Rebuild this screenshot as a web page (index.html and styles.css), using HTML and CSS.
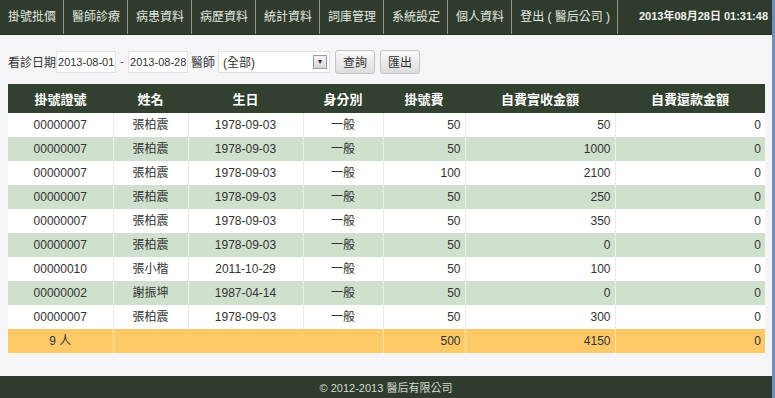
FILE: index.html
```html
<!DOCTYPE html>
<html lang="zh-Hant">
<head>
    <meta charset="UTF-8">
    <title>掛號批價報表</title>
    <link rel="stylesheet" href="styles.css">
</head>
<body>

<div class="page">
    <div class="topnav">
        <a class="nav-item" href="#">掛號批價</a>
        <a class="nav-item" href="#">醫師診療</a>
        <a class="nav-item" href="#">病患資料</a>
        <a class="nav-item" href="#">病歷資料</a>
        <a class="nav-item" href="#">統計資料</a>
        <a class="nav-item" href="#">詞庫管理</a>
        <a class="nav-item" href="#">系統設定</a>
        <a class="nav-item" href="#">個人資料</a>
        <a class="nav-item" href="#">登出 ( 醫后公司 )</a>
        <div class="nav-clock">2013年08月28日 01:31:48</div>
    </div>

    <div class="content">
        <div class="filter">
            <span class="filter-label">看診日期</span>
            <input type="text" class="date-input" value="2013-08-01">
            <span class="dash">-</span>
            <input type="text" class="date-input" value="2013-08-28">
            <span class="filter-label doctor">醫師</span>
            <div class="select-box">
                <span>(全部)</span>
                <span class="select-arrow">▼</span>
            </div>
            <button class="btn">查詢</button>
            <button class="btn">匯出</button>
        </div>

        <table class="report">
            <thead>
                <tr>
                    <th class="c-no">掛號證號</th>
                    <th class="c-name">姓名</th>
                    <th class="c-birth">生日</th>
                    <th class="c-type">身分別</th>
                    <th class="c-fee">掛號費</th>
                    <th class="c-paid">自費實收金額</th>
                    <th class="c-refund">自費還款金額</th>
                </tr>
            </thead>
            <tbody>
                <tr><td>00000007</td><td>張柏震</td><td>1978-09-03</td><td>一般</td><td class="num">50</td><td class="num">50</td><td class="num">0</td></tr>
                <tr><td>00000007</td><td>張柏震</td><td>1978-09-03</td><td>一般</td><td class="num">50</td><td class="num">1000</td><td class="num">0</td></tr>
                <tr><td>00000007</td><td>張柏震</td><td>1978-09-03</td><td>一般</td><td class="num">100</td><td class="num">2100</td><td class="num">0</td></tr>
                <tr><td>00000007</td><td>張柏震</td><td>1978-09-03</td><td>一般</td><td class="num">50</td><td class="num">250</td><td class="num">0</td></tr>
                <tr><td>00000007</td><td>張柏震</td><td>1978-09-03</td><td>一般</td><td class="num">50</td><td class="num">350</td><td class="num">0</td></tr>
                <tr><td>00000007</td><td>張柏震</td><td>1978-09-03</td><td>一般</td><td class="num">50</td><td class="num">0</td><td class="num">0</td></tr>
                <tr><td>00000010</td><td>張小楷</td><td>2011-10-29</td><td>一般</td><td class="num">50</td><td class="num">100</td><td class="num">0</td></tr>
                <tr><td>00000002</td><td>謝振坤</td><td>1987-04-14</td><td>一般</td><td class="num">50</td><td class="num">0</td><td class="num">0</td></tr>
                <tr><td>00000007</td><td>張柏震</td><td>1978-09-03</td><td>一般</td><td class="num">50</td><td class="num">300</td><td class="num">0</td></tr>
            </tbody>
            <tfoot>
                <tr><td>9 人</td><td colspan="3"></td><td class="num">500</td><td class="num">4150</td><td class="num">0</td></tr>
            </tfoot>
        </table>
    </div>

    <div class="footer">© 2012-2013 醫后有限公司</div>
</div>

</body>
</html>
```

FILE: styles.css
```css
body {
    margin: 0;
    padding: 0;
    background-color: #f5f5f7;
    font-family: "Liberation Sans", "Noto Sans CJK TC", sans-serif;
    font-size: 12px;
    color: #333;
}
.page {
    width: 772px;
    height: 398px;
    border-right: 3px solid #6f90b8;
    display: flex;
    flex-direction: column;
    background-color: #f5f5f7;
}
.topnav {
    display: flex;
    height: 34px;
    background-color: #2f3b2c;
    border-bottom: 1px solid #26301f;
}
.nav-item {
    display: block;
    padding: 0 7px 0 8px;
    line-height: 34px;
    color: #e4e8e2;
    font-size: 12px;
    text-decoration: none;
    border-right: 1px solid #8e968b;
    white-space: nowrap;
}
.nav-clock {
    flex: 1;
    text-align: right;
    line-height: 33px;
    padding-right: 4px;
    color: #f0f0f0;
    font-size: 11px;
    font-weight: bold;
    white-space: nowrap;
}
.content {
    flex: 1;
    padding: 14px 8px 0 8px;
}
.filter {
    display: flex;
    align-items: center;
    height: 25px;
    margin-bottom: 10px;
}
.filter-label.doctor {
    margin-left: 3px;
    margin-right: 2px;
}
.date-input {
    box-sizing: border-box;
    width: 60px;
    height: 22px;
    padding: 0 1px;
    border: 1px solid #e2e2e2;
    background: #fff;
    font-family: inherit;
    font-size: 11px;
    color: #333;
}
.dash {
    margin: 0 4px;
    color: #555;
}
.select-box {
    display: flex;
    align-items: center;
    justify-content: space-between;
    width: 104px;
    height: 20px;
    margin-left: 1px;
    padding: 0 2px 0 4px;
    border: 1px solid #e0e0e0;
    background: #fff;
}
.select-arrow {
    width: 12px;
    height: 12px;
    line-height: 12px;
    text-align: center;
    font-size: 7px;
    color: #333;
    background: linear-gradient(#f4f4f4, #d8d8d8);
    border: 1px solid #999;
}
.btn {
    height: 24px;
    margin-left: 5px;
    padding: 0 7px;
    border: 1px solid #c4c4c4;
    border-radius: 3px;
    background: linear-gradient(#fafafa, #dcdcdc);
    font-family: inherit;
    font-size: 12px;
    color: #333;
}
.report {
    width: 757px;
    border-collapse: collapse;
    table-layout: fixed;
}
.report th {
    height: 29px;
    padding: 0;
    background-color: #324030;
    color: #fff;
    font-size: 13px;
    font-weight: bold;
    text-align: center;
}
.c-no { width: 105px; }
.c-name { width: 75px; }
.c-birth { width: 115px; }
.c-type { width: 80px; }
.c-fee { width: 82px; }
.c-paid { width: 150px; }
.c-refund { width: 150px; }
.report td {
    height: 24px;
    padding: 0 4px;
    text-align: center;
    border-right: 1px solid #e2eee0;
    background-color: #fff;
    line-height: 24px;
}
.report td:last-child {
    border-right: none;
}
.report tbody tr:nth-child(even) td {
    background-color: #cfe0cd;
    border-right-color: #e9f2e8;
}
.report td.num {
    text-align: right;
}
.report tfoot td {
    background-color: #fec967;
    border-right-color: #ffe3a6;
}
.footer {
    height: 22px;
    line-height: 24px;
    background-color: #2f3b2c;
    color: #d4d8d2;
    font-size: 11px;
    text-align: center;
}
```
